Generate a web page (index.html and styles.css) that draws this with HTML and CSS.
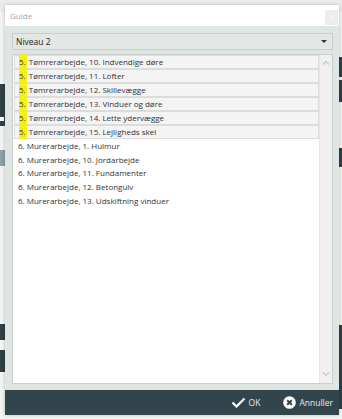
FILE: index.html
```html
<!DOCTYPE html>
<html lang="da">
<head>
    <meta charset="UTF-8">
    <title>Guide</title>
    <link rel="stylesheet" href="styles.css">
</head>
<body>
    <!-- Siden bag dialogen -->
    <div class="side">
        <div class="kant venstre">
            <div class="blok blok-top"><span class="firkant"></span></div>
            <div class="blok blok-lys"></div>
            <div class="blok blok-bund1"></div>
            <div class="blok blok-bund2"></div>
        </div>
        <div class="kant hoejre">
            <div class="blok blok-h1"></div>
            <div class="blok blok-h2"></div>
            <div class="blok blok-h3"></div>
            <div class="blok blok-h4"></div>
        </div>
    </div>

    <!-- Guide dialog -->
    <div class="dialog">
        <div class="titel">
            <span>Guide</span>
            <button class="luk">&times;</button>
        </div>
        <div class="indhold">
            <div class="vaelg">
                <span>Niveau 2</span>
                <span class="pil"></span>
            </div>
            <div class="liste">
                <div class="raekker">
                    <div class="raekke valgt"><span class="mark">5.</span> Tømrerarbejde, 10. Indvendige døre</div>
                    <div class="raekke valgt"><span class="mark">5.</span> Tømrerarbejde, 11. Lofter</div>
                    <div class="raekke valgt"><span class="mark">5.</span> Tømrerarbejde, 12. Skillevægge</div>
                    <div class="raekke valgt"><span class="mark">5.</span> Tømrerarbejde, 13. Vinduer og døre</div>
                    <div class="raekke valgt"><span class="mark">5.</span> Tømrerarbejde, 14. Lette ydervægge</div>
                    <div class="raekke valgt"><span class="mark">5.</span> Tømrerarbejde, 15. Lejligheds skel</div>
                    <div class="raekke">6. Murerarbejde, 1. Hulmur</div>
                    <div class="raekke">6. Murerarbejde, 10. Jordarbejde</div>
                    <div class="raekke">6. Murerarbejde, 11. Fundamenter</div>
                    <div class="raekke">6. Murerarbejde, 12. Betongulv</div>
                    <div class="raekke">6. Murerarbejde, 13. Udskiftning vinduer</div>
                </div>
                <div class="scroll">
                    <svg width="8" height="5" viewBox="0 0 8 5"><path d="M1 4.5 L4 1.5 L7 4.5" fill="none" stroke="#c4c8c8" stroke-width="1.2"/></svg>
                    <svg width="8" height="5" viewBox="0 0 8 5"><path d="M1 0.5 L4 3.5 L7 0.5" fill="none" stroke="#c4c8c8" stroke-width="1.2"/></svg>
                </div>
            </div>
        </div>
        <div class="fod">
            <button class="knap">
                <svg width="15" height="11" viewBox="0 0 15 11"><path d="M1.5 5.5 L5.5 9.5 L13.5 1.5" fill="none" stroke="#ffffff" stroke-width="2.2"/></svg>
                OK
            </button>
            <button class="knap">
                <svg width="13" height="13" viewBox="0 0 13 13"><circle cx="6.5" cy="6.5" r="6.3" fill="#ffffff"/><path d="M4.2 4.2 L8.8 8.8 M8.8 4.2 L4.2 8.8" stroke="#33454c" stroke-width="2"/></svg>
                Annuller
            </button>
        </div>
    </div>
</body>
</html>
```

FILE: styles.css
```css
body {
    margin: 0;
    width: 342px;
    height: 419px;
    overflow: hidden;
    position: relative;
    background: #f4f6f6;
    font-family: "Open Sans", "Noto Sans", sans-serif;
}

/* Siden bag dialogen */
.side {
    display: flex;
    justify-content: space-between;
    height: 419px;
    border-top: 12px solid #eceeee;
    box-sizing: border-box;
}

.kant {
    width: 6px;
    display: flex;
    flex-direction: column;
}

.blok {
    background: #2f4046;
}

.blok-top {
    margin-top: 72px;
    height: 42px;
    display: flex;
    flex-direction: column;
    justify-content: flex-end;
}

.firkant {
    width: 4px;
    height: 4px;
    background: #ffffff;
    margin-bottom: 5px;
}

.blok-lys {
    margin-top: 24px;
    height: 16px;
    background: #8fa0a6;
}

.blok-bund1 {
    margin-top: 158px;
    height: 16px;
}

.blok-bund2 {
    margin-top: 10px;
    height: 22px;
}

.hoejre .blok {
    width: 3px;
    margin-left: auto;
}

.blok-h1 { margin-top: 45px; height: 20px; }
.blok-h2 { margin-top: 3px; height: 22px; }
.blok-h3 { margin-top: 46px; height: 19px; }
.blok-h4 { margin-top: 158px; height: 84px; }

/* Dialog */
.dialog {
    position: absolute;
    left: 5px;
    top: 5px;
    width: 334px;
    height: 410px;
    display: flex;
    flex-direction: column;
    background: #dfe5e2;
    box-shadow: 0 0 4px rgba(0, 0, 0, 0.25);
}

.titel {
    height: 21px;
    background: #ffffff;
    display: flex;
    align-items: center;
    justify-content: space-between;
    padding-left: 5px;
    font-size: 8px;
    color: #a0a4a4;
}

.luk {
    width: 13px;
    height: 15px;
    margin-right: 1px;
    margin-top: 3px;
    border: none;
    background: #ebecec;
    color: #ffffff;
    font-size: 9px;
    padding: 0;
}

.indhold {
    flex: 1;
    padding: 7px 6px 6px 7px;
    display: flex;
    flex-direction: column;
    gap: 4px;
}

.vaelg {
    height: 17px;
    box-sizing: border-box;
    border: 1px solid #c9cfcc;
    background: #e3e8e5;
    display: flex;
    align-items: center;
    justify-content: space-between;
    padding: 0 5px 0 3px;
    font-size: 8.5px;
    color: #222;
}

.pil {
    width: 0;
    height: 0;
    border-left: 3px solid transparent;
    border-right: 3px solid transparent;
    border-top: 3px solid #333;
}

.liste {
    flex: 1;
    background: #ffffff;
    border: 1px solid #c9cfcc;
    display: flex;
}

.raekker {
    flex: 1;
    padding: 0 0 0 1px;
}

.raekke {
    height: 13.7px;
    line-height: 13.7px;
    padding-left: 4px;
    font-size: 8px;
    color: #333;
    white-space: nowrap;
}

.raekke.valgt {
    height: 12px;
    line-height: 12px;
    background: #f4f4f4;
    border: 1px solid #dcdcdc;
}

/* Gul overstregning */
.mark {
    background: #f2f20a;
    box-shadow: 0 2px 0 #f2f20a, 0 -2px 0 #f2f20a;
    border-radius: 2px;
    padding: 0 1px 0 0;
}

.scroll {
    width: 12px;
    background: #f0f0f0;
    border-left: 1px solid #e6e6e6;
    display: flex;
    flex-direction: column;
    justify-content: space-between;
    align-items: center;
    padding: 5px 0 6px;
}

/* Knapper i bunden */
.fod {
    height: 25px;
    background: #33454c;
    display: flex;
    justify-content: flex-end;
    align-items: center;
    gap: 23px;
    padding-right: 6px;
}

.knap {
    border: none;
    background: none;
    color: #e6eaeb;
    font-family: inherit;
    font-size: 8.5px;
    display: flex;
    align-items: center;
    gap: 3px;
    padding: 0;
}
```
